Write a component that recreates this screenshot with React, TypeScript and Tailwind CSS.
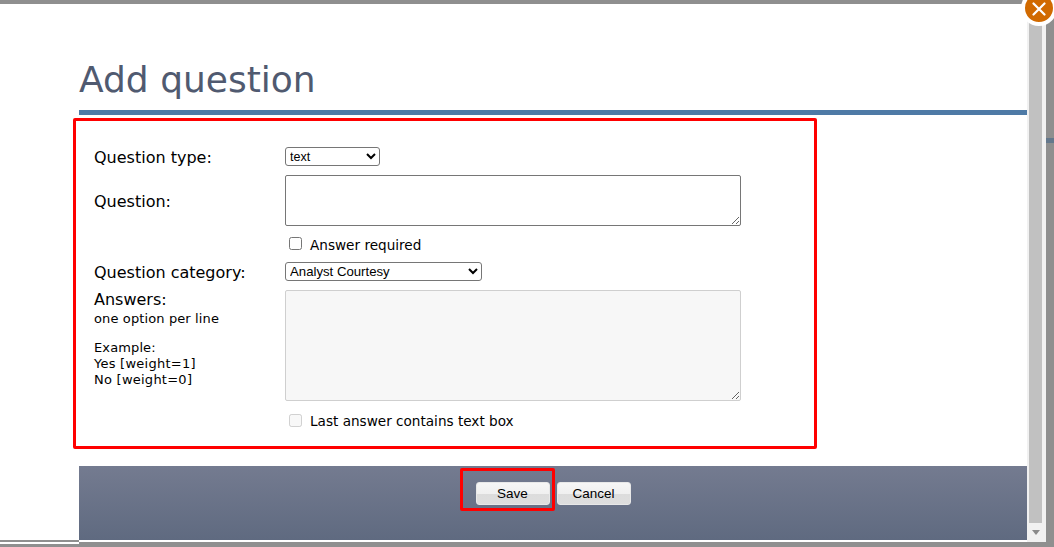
const SANS = 'font-["DejaVu_Sans",sans-serif]';

function Scrollbar() {
  return (
    <div className="w-[19px] bg-[#f1f1f1] flex flex-col items-start pl-[2px]">
      <div className="w-[13px] flex-1 bg-[#c1c1c1]" />
      <div className="h-[19px] w-[13px] flex items-center justify-center">
        <svg width="8" height="5" viewBox="0 0 8 5">
          <path d="M0 0h8L4 5z" fill="#8a8a8a" />
        </svg>
      </div>
    </div>
  );
}

function ActionButton({ label }: { label: string }) {
  return (
    <button className="w-[74px] h-[23px] rounded-[3px] border border-[#e8e8e8] bg-[linear-gradient(#f6f6f6_0%,#f0f0f0_50%,#dcdcdc_50%,#dedede_100%)] text-[13.5px] font-['Liberation_Sans',sans-serif] text-black leading-none">
      {label}
    </button>
  );
}

export default function App() {
  return (
    <div className={`relative w-[1054px] h-[547px] overflow-hidden bg-[#8f8f8f] pt-[4px] ${SANS}`}>
      <div className="flex h-[538px] w-[1046px]">
        <div className="w-[79px] bg-white border-b-2 border-[#8f8f8f] shadow-[0_2px_0_#fff]" />
        <div className="w-[948px] bg-white border-b-2 border-white flex flex-col">
          <h1 className="h-[106px] pt-[52px] text-[36px] leading-[48px] text-[#505a70]">Add question</h1>
          <div className="h-[5px] bg-[#4e7aa6]" />

          <div className="flex-1 pl-[15px] pt-[32px] text-black">
            <div className="flex h-[28px]">
              <label className="w-[191px] pt-[1px] text-[16px] leading-[20px]">Question type:</label>
              <select className="w-[95px] h-[19px] border border-[#767676] rounded-[3px] bg-white text-[12.5px] font-['Liberation_Sans',sans-serif]">
                <option>text</option>
              </select>
            </div>
            <div className="flex">
              <label className="w-[191px] pt-[17px] text-[16px] leading-[20px]">Question:</label>
              <textarea className="w-[456px] h-[51px] border border-[#767676] rounded-[2px] bg-white" />
            </div>
            <div className="flex items-center h-[20px] mt-[9px] ml-[191px]">
              <input type="checkbox" className="w-[13px] h-[13px] ml-[4px] mr-[8px] mb-[3px] appearance-auto" />
              <span className="text-[13.6px]">Answer required</span>
            </div>
            <div className="flex h-[28px] mt-[7px]">
              <label className="w-[191px] pt-[1px] text-[16px] leading-[20px]">Question category:</label>
              <select className="w-[197px] h-[19px] border border-[#767676] rounded-[3px] bg-white text-[13.2px] font-['Liberation_Sans',sans-serif]">
                <option>Analyst Courtesy</option>
              </select>
            </div>
            <div className="flex">
              <div className="w-[191px] text-[13px] leading-[16px] tracking-[0.12px]">
                <div className="text-[16px] leading-[20px] mt-[-1px] tracking-normal pt-[1px] mb-[1px]">Answers:</div>
                <div>one option per line</div>
                <div className="mt-[13px]">Example:</div>
                <div className="tracking-[0.25px]">Yes [weight=1]</div>
                <div className="tracking-[0.25px]">No [weight=0]</div>
              </div>
              <textarea disabled className="w-[456px] h-[111px] border border-[#cfcfcf] rounded-[2px] bg-[#f7f7f7]" />
            </div>
            <div className="flex items-center h-[20px] mt-[10px] ml-[191px]">
              <input type="checkbox" disabled className="w-[13px] h-[13px] ml-[4px] mr-[8px] mb-[2px] appearance-auto" />
              <span className="text-[13.6px]">Last answer contains text box</span>
            </div>
          </div>

          <div className="h-[74px] bg-[linear-gradient(#747b90,#5f6a80)] flex justify-center gap-[7px] pt-[16px]">
            <ActionButton label="Save" />
            <ActionButton label="Cancel" />
          </div>
        </div>
        <Scrollbar />
      </div>

      {/* annotations on top of the shot */}
      <div className="absolute left-[73px] top-[118px] w-[744px] h-[331px] border-[3px] border-[#ff0000] rounded-[2px] pointer-events-none" />
      <div className="absolute left-[460px] top-[468px] w-[95px] h-[43px] border-[3px] border-[#ff0000] rounded-[2px] pointer-events-none" />

      {/* sliver of the page behind */}
      <div className="absolute left-[1046px] top-[138px] w-[8px] h-[5px] bg-[#64788c]" />

      <button className="absolute left-[1021px] top-[-10px] w-[36px] h-[36px] rounded-full bg-[#d16a00] border-[4px] border-white flex items-center justify-center">
        <svg width="14" height="14" viewBox="0 0 14 14" className="mt-[2px]">
          <path d="M1.5 1.5l11 11M12.5 1.5l-11 11" stroke="#fff" strokeWidth="2.2" strokeLinecap="round" />
        </svg>
      </button>
    </div>
  );
}
